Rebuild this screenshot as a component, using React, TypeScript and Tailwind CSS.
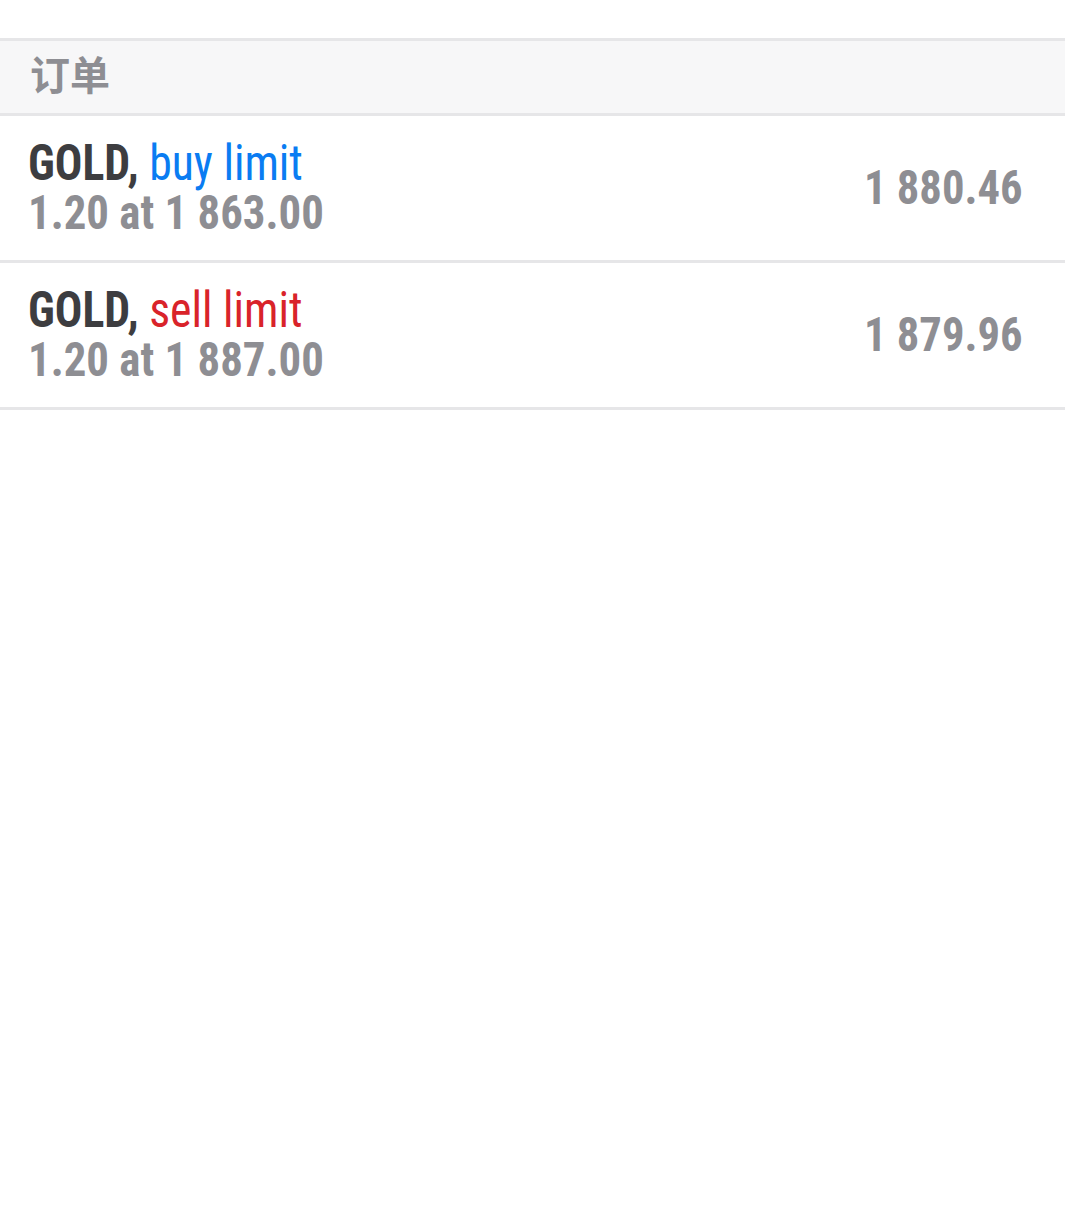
const orders = [
  { symbol: "GOLD", type: "buy limit", volume: "1.20", at: "1 863.00", price: "1 880.46" },
  { symbol: "GOLD", type: "sell limit", volume: "1.20", at: "1 887.00", price: "1 879.96" },
];

export default function App() {
  return (
    <div className="min-h-[1230px] bg-white pt-[38px] font-['Roboto','Noto_Sans_CJK_SC',sans-serif]">
      <div className="border-y-[3px] border-[#e6e6e8] bg-[#f7f7f8] h-[78px] flex items-center px-[30px] pb-[8px]">
        <span className="text-[40px] leading-none text-[#8e8e93] font-['Noto_Sans_CJK_SC',sans-serif] font-bold">订单</span>
      </div>
      {orders.map((o, i) => (
        <div key={i} className="h-[147px] border-b-[3px] border-[#e6e6e8] flex items-center justify-between pl-[28px] pr-[42px] font-stretch-condensed">
          <div className="flex flex-col font-bold origin-left scale-x-[0.915]">
            <div className="text-[50px] leading-[50px] text-[#3d3d40] whitespace-nowrap">
              {o.symbol},{" "}
              <span className={`font-normal ${o.type.startsWith("buy") ? "text-[#0a7cf2]" : "text-[#d9232a]"}`}>{o.type}</span>
            </div>
            <div className="text-[49px] leading-[50px] text-[#8e8e93] whitespace-nowrap">
              {o.volume} at {o.at}
            </div>
          </div>
          <div className="text-[48px] font-bold text-[#8e8e93] origin-right scale-x-[0.93] whitespace-nowrap">{o.price}</div>
        </div>
      ))}
    </div>
  );
}
